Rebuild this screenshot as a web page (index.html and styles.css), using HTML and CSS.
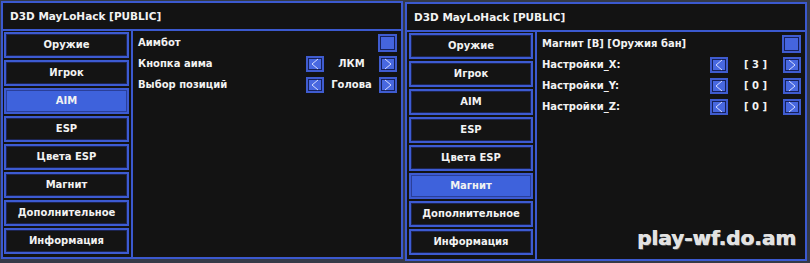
FILE: index.html
```html
<!DOCTYPE html>
<html>
    <head>
        <meta charset='utf-8'/>
        <link rel="stylesheet" href="styles.css">
    </head>
    <body>
        <div id='screen'>
            <div class='window'>
                <div class='title'>D3D MayLoHack [PUBLIC]</div>
                <div class='main'>
                    <ul class='tabs'>
                        <li class='tab'>Оружие</li>
                        <li class='tab'>Игрок</li>
                        <li class='tab active'>AIM</li>
                        <li class='tab'>ESP</li>
                        <li class='tab'>Цвета ESP</li>
                        <li class='tab'>Магнит</li>
                        <li class='tab'>Дополнительное</li>
                        <li class='tab'>Информация</li>
                    </ul>
                    <div class='content'>
                        <div class='row'><span class='label'>Аимбот</span><span class='check'></span></div>
                        <div class='row'>
                            <span class='label'>Кнопка аима</span>
                            <span class='btn'><svg width='14' height='12'><polyline points='10,1 4,6 10,11' /></svg></span>
                            <span class='value'>ЛКМ</span>
                            <span class='btn'><svg width='14' height='12'><polyline points='4,1 10,6 4,11' /></svg></span>
                        </div>
                        <div class='row'>
                            <span class='label'>Выбор позиций</span>
                            <span class='btn'><svg width='14' height='12'><polyline points='10,1 4,6 10,11' /></svg></span>
                            <span class='value'>Голова</span>
                            <span class='btn'><svg width='14' height='12'><polyline points='4,1 10,6 4,11' /></svg></span>
                        </div>
                    </div>
                </div>
            </div>
            <div class='window second'>
                <div class='title'>D3D MayLoHack [PUBLIC]</div>
                <div class='main'>
                    <ul class='tabs'>
                        <li class='tab'>Оружие</li>
                        <li class='tab'>Игрок</li>
                        <li class='tab'>AIM</li>
                        <li class='tab'>ESP</li>
                        <li class='tab'>Цвета ESP</li>
                        <li class='tab active'>Магнит</li>
                        <li class='tab'>Дополнительное</li>
                        <li class='tab'>Информация</li>
                    </ul>
                    <div class='content'>
                        <div class='row'><span class='label'>Магнит [B] [Оружия бан]</span><span class='check'></span></div>
                        <div class='row'>
                            <span class='label'>Настройки_X:</span>
                            <span class='btn'><svg width='14' height='12'><polyline points='10,1 4,6 10,11' /></svg></span>
                            <span class='value'>[ 3 ]</span>
                            <span class='btn'><svg width='14' height='12'><polyline points='4,1 10,6 4,11' /></svg></span>
                        </div>
                        <div class='row'>
                            <span class='label'>Настройки_Y:</span>
                            <span class='btn'><svg width='14' height='12'><polyline points='10,1 4,6 10,11' /></svg></span>
                            <span class='value'>[ 0 ]</span>
                            <span class='btn'><svg width='14' height='12'><polyline points='4,1 10,6 4,11' /></svg></span>
                        </div>
                        <div class='row'>
                            <span class='label'>Настройки_Z:</span>
                            <span class='btn'><svg width='14' height='12'><polyline points='10,1 4,6 10,11' /></svg></span>
                            <span class='value'>[ 0 ]</span>
                            <span class='btn'><svg width='14' height='12'><polyline points='4,1 10,6 4,11' /></svg></span>
                        </div>
                    </div>
                </div>
            </div>
            <div class='watermark'>play-wf.do.am</div>
        </div>
    </body>
</html>
```

FILE: styles.css
```css
body{
    margin:0;
    padding:0;
    width:810px;
    height:263px;
    overflow:hidden;
    background-color:#353a48;
    font-family:"DejaVu Sans", "Liberation Sans", sans-serif;
    font-size:10px;
    font-weight:bold;
    color:#f2f2f2;
}
#screen{
    position:relative;
    display:flex;
    gap:2px;
    padding:1px 0 0 1px;
}
.window{
    box-sizing:border-box;
    width:402px;
    height:258px;
    display:flex;
    flex-direction:column;
    border:2px solid #3b59cf;
    background-color:#131313;
}
.second{
    margin-top:1px;
    height:259px;
}
.title{
    height:26px;
    line-height:26px;
    padding-left:7px;
    font-size:10.5px;
    border-bottom:2px solid #3b59cf;
}
.main{
    flex:1;
    display:flex;
}
.tabs{
    list-style:none;
    margin:0;
    padding:1px 2px 0 1px;
    width:125px;
    display:flex;
    flex-direction:column;
    gap:2px;
    border-right:2px solid #3b59cf;
}
.second .tabs{
    padding-left:2px;
    width:124px;
}
.tab{
    box-sizing:border-box;
    height:26px;
    line-height:22px;
    text-align:center;
    border:2px solid #3d5bd2;
    box-shadow:inset 0 0 0 1px #1c2450;
    background-color:#141414;
}
.active{
    background-color:#3e62dc;
    box-shadow:inset 0 0 0 1px #2a3f99;
}
.content{
    flex:1;
    padding:1px 4px 0 5px;
}
.row{
    height:21px;
    display:flex;
    align-items:center;
}
.label{
    flex:1;
}
.check{
    box-sizing:border-box;
    width:19px;
    height:18px;
    border:2px solid #3f5cd0;
    box-shadow:inset 0 0 0 1px #17215a;
    background-color:#4565de;
}
.btn{
    box-sizing:border-box;
    width:18px;
    height:16px;
    display:flex;
    align-items:center;
    justify-content:center;
    border:2px solid #3f5cd0;
    box-shadow:inset 0 0 0 1px #17215a;
    background-color:#4868e0;
}
.btn polyline{
    fill:none;
    stroke:#d4dcff;
    stroke-width:1;
}
.value{
    width:55px;
    text-align:center;
}
.watermark{
    position:absolute;
    right:14px;
    top:226px;
    font-size:20px;
    color:#e2e2e2;
    text-shadow:0.6px 0 0 #e2e2e2, 1px 1px 0 #555;
}
```
